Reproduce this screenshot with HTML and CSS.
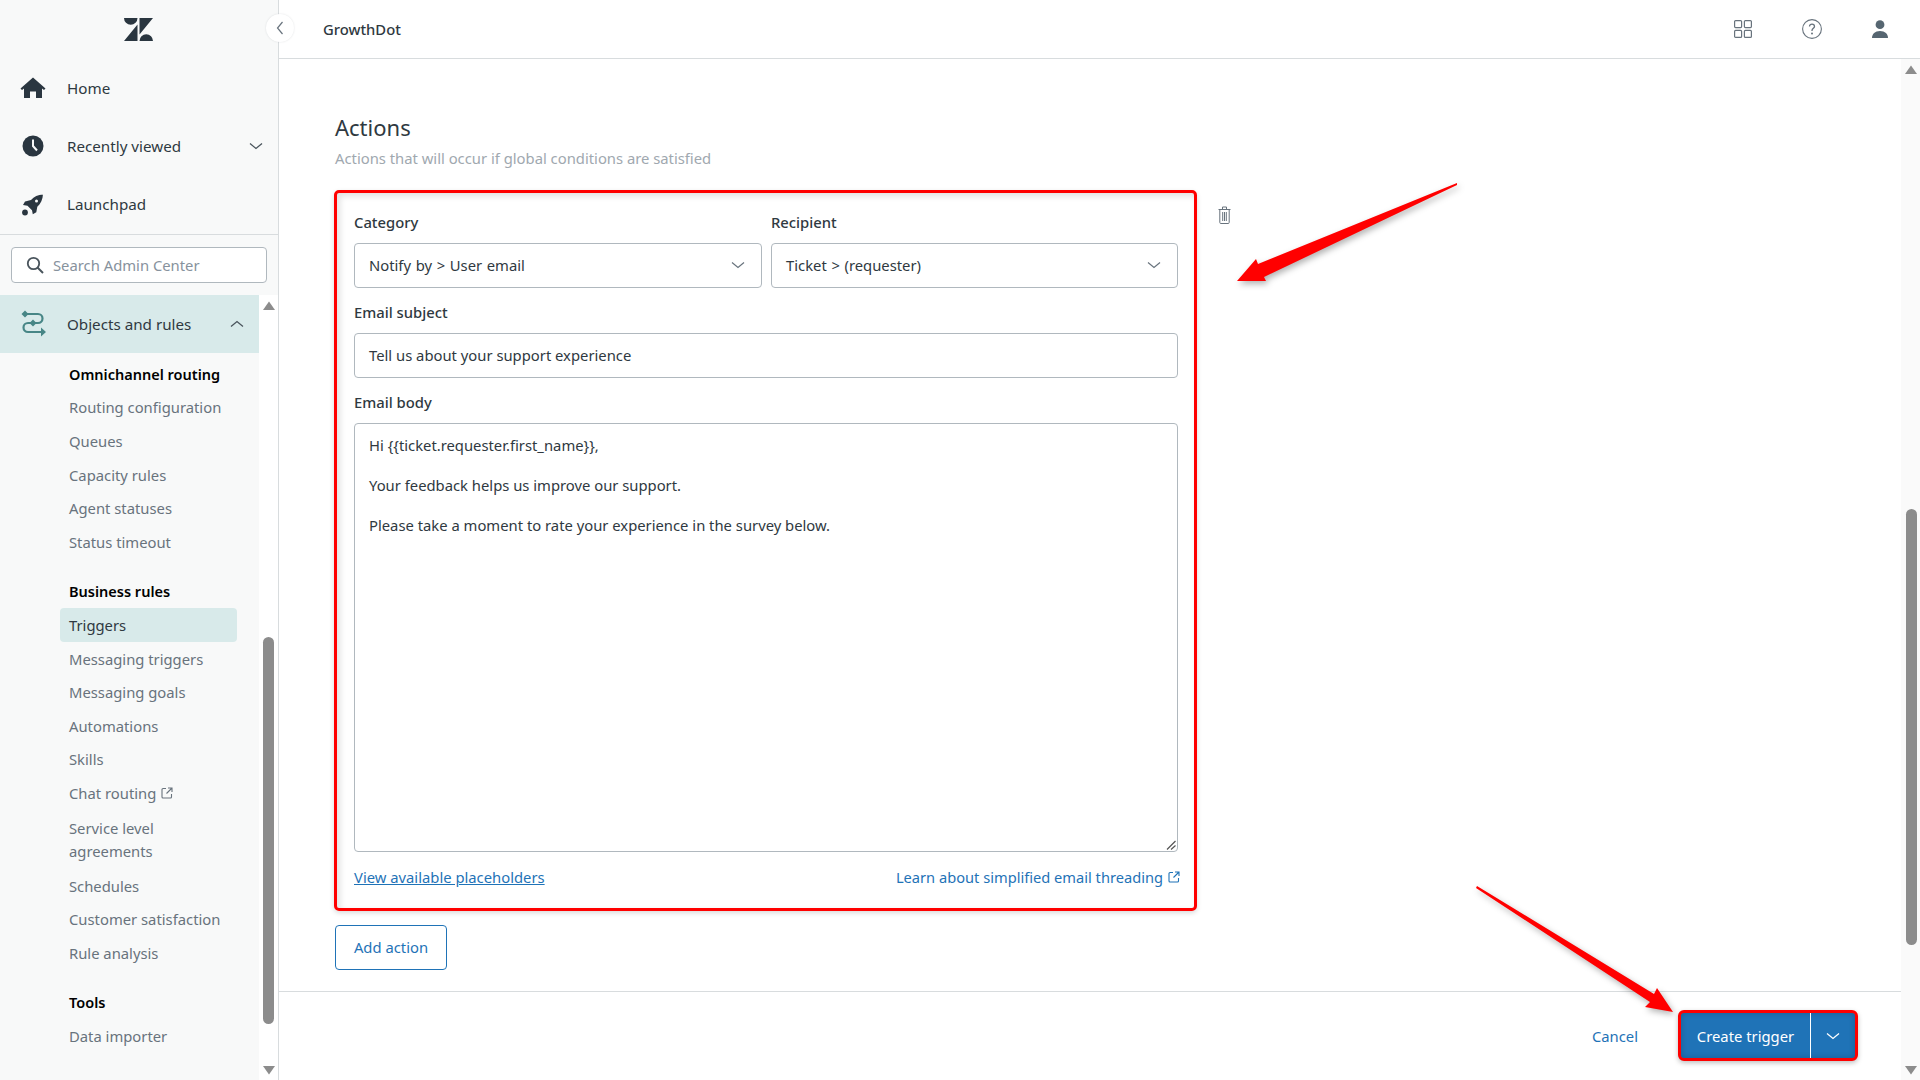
FILE: index.html
```html
<!DOCTYPE html>
<html lang="en">
<head>
<meta charset="utf-8">
<title>GrowthDot - Create trigger</title>
<link rel="stylesheet" href="styles.css">
</head>
<body>
<div class="app">
  <aside class="sidebar">
    <div class="logo-row">
      <svg class="logo" viewBox="0 0 29 23" width="29" height="23"><path d="M0 0h13.5a6.75 6.75 0 0 1-13.5 0zM15.500 0H29L15.500 16.500zM13.500 6.500V23H0zM15.500 23a6.750 6.750 0 0 1 13.500 0z" fill="#2a3640"/></svg>
    </div>
    <nav class="top-nav">
      <div class="nav-row">
        <svg class="nav-icon" viewBox="0 0 26 22" width="26" height="22"><path d="M13 0.500L25.500 11.500 24 13 22 11.500V21h-6v-6.500h-6V21H4V11.500L2 13 0.500 11.500z" fill="#2a3640"/></svg>
        <span>Home</span>
      </div>
      <div class="nav-row">
        <svg class="nav-icon" viewBox="0 0 22 22" width="22" height="22"><circle cx="11" cy="11" r="10.500" fill="#2a3640"/><path d="M11 4.500V11l4 4.500" fill="none" stroke="#f8f9f9" stroke-width="2"/></svg>
        <span>Recently viewed</span>
        <svg class="chev" viewBox="0 0 14 8" width="14" height="8"><path d="M1 1.500l6 5 6-5" fill="none" stroke="#49545c" stroke-width="1.300"/></svg>
      </div>
      <div class="nav-row">
        <svg class="nav-icon" viewBox="0 0 22 22" width="22" height="22"><path d="M21 .5c-5 .3-9 2.200-12 5.500L3 7.500 1 11l4.500 .8 4.500 4.500 .8 4 3.500-2 1-5.500c3.500-3 5.500-7.500 5.700-12.800z" fill="#2a3640"/><circle cx="14.500" cy="7" r="1.500" fill="#f8f9f9"/><circle cx="3" cy="18.500" r="2.900" fill="#2a3640"/></svg>
        <span>Launchpad</span>
      </div>
    </nav>
    <div class="search-wrap">
      <div class="search">
        <svg viewBox="0 0 18 18" width="18" height="18"><circle cx="7.500" cy="7.500" r="5.700" fill="none" stroke="#49545c" stroke-width="1.800"/><path d="M11.500 11.500L17 17" stroke="#49545c" stroke-width="2"/></svg>
        <span>Search Admin Center</span>
      </div>
    </div>
    <div class="side-scroll">
      <div class="side-content">
        <div class="section-row">
          <svg class="nav-icon" viewBox="0 0 26 28" width="26" height="28"><path d="M5 4h13a4.500 4.500 0 0 1 0 9H8a4.500 4.500 0 0 0 0 9h15" fill="none" stroke="#478686" stroke-width="2.200"/><path d="M5 .5L8.500 4 5 7.500 1.500 4zM13 9.500l3.500 3.500-3.500 3.500L9.500 13zM21 17.500l5 4.500-5 4.500z" fill="#478686"/></svg>
          <span>Objects and rules</span>
          <svg class="chev-up" viewBox="0 0 14 8" width="14" height="8"><path d="M1 6.500l6-5 6 5" fill="none" stroke="#49545c" stroke-width="1.300"/></svg>
        </div>
        <ul class="sub-list">
          <li class="sub-head">Omnichannel routing</li>
          <li>Routing configuration</li>
          <li>Queues</li>
          <li>Capacity rules</li>
          <li>Agent statuses</li>
          <li>Status timeout</li>
          <li class="sub-head group-start">Business rules</li>
          <li class="sub-active">Triggers</li>
          <li>Messaging triggers</li>
          <li>Messaging goals</li>
          <li>Automations</li>
          <li>Skills</li>
          <li>Chat routing <svg class="ext" viewBox="0 0 12 12" width="12" height="12"><path d="M5 1.500H2A1 1 0 0 0 1 2.500v7.500a1 1 0 0 0 1 1h7.500a1 1 0 0 0 1-1V7M7 1h4v4M11 1L5.500 6.500" fill="none" stroke="#68737d" stroke-width="1.100"/></svg></li>
          <li class="two-line">Service level<br>agreements</li>
          <li>Schedules</li>
          <li>Customer satisfaction</li>
          <li>Rule analysis</li>
          <li class="sub-head group-start">Tools</li>
          <li>Data importer</li>
        </ul>
      </div>
      <div class="scrollbar side-bar">
        <svg class="arr" viewBox="0 0 12 9" width="12" height="9"><path d="M6 .5L12 9H0z" fill="#8c8c8c"/></svg>
        <div class="thumb side-thumb"></div>
        <svg class="arr arr-end" viewBox="0 0 12 9" width="12" height="9"><path d="M0 0h12L6 8.500z" fill="#8c8c8c"/></svg>
      </div>
    </div>
  </aside>

  <div class="main">
    <header class="topbar">
      <span class="brand">GrowthDot</span>
      <div class="top-icons">
        <svg viewBox="0 0 18 18" width="18" height="18"><g fill="none" stroke="#68737d" stroke-width="1.200" ><rect x=".6" y=".6" width="7" height="7" rx="1"/><rect x="10.400" y=".6" width="7" height="7" rx="1"/><rect x=".6" y="10.400" width="7" height="7" rx="1"/><rect x="10.400" y="10.400" width="7" height="7" rx="1"/></g></svg>
        <svg viewBox="0 0 20 20" width="20" height="20"><circle cx="10" cy="10" r="9.400" fill="none" stroke="#68737d" stroke-width="1.100"/><path d="M7.500 7.600c0-1.500 1.100-2.500 2.500-2.500s2.500 1 2.500 2.400c0 1.700-2.500 2-2.500 4v.6" fill="none" stroke="#68737d" stroke-width="1.300"/><circle cx="10" cy="14.600" r="1" fill="#68737d"/></svg>
        <svg viewBox="0 0 16 18" width="16" height="18"><circle cx="8" cy="4.700" r="4.400" fill="#566671"/><path d="M0 18c0-4 3-7 8-7s8 3 8 7z" fill="#566671"/></svg>
      </div>
      <div class="collapse">
        <svg viewBox="0 0 8 14" width="8" height="14"><path d="M6.500 1L1.500 7l5 6" fill="none" stroke="#68737d" stroke-width="1.200"/></svg>
      </div>
    </header>

    <div class="body">
      <div class="column">
        <section class="content">
          <h2 class="title">Actions</h2>
          <p class="subtitle">Actions that will occur if global conditions are satisfied</p>
          <div class="action-row">
            <div class="card">
              <div class="field-row">
                <div class="field">
                  <label class="label">Category</label>
                  <div class="control select">
                    <span>Notify by &gt; User email</span>
                    <svg viewBox="0 0 14 8" width="14" height="8"><path d="M1 1.500l6 5 6-5" fill="none" stroke="#68737d" stroke-width="1.200"/></svg>
                  </div>
                </div>
                <div class="field">
                  <label class="label">Recipient</label>
                  <div class="control select">
                    <span>Ticket &gt; (requester)</span>
                    <svg viewBox="0 0 14 8" width="14" height="8"><path d="M1 1.500l6 5 6-5" fill="none" stroke="#68737d" stroke-width="1.200"/></svg>
                  </div>
                </div>
              </div>
              <label class="label spaced">Email subject</label>
              <div class="control">Tell us about your support experience</div>
              <label class="label spaced">Email body</label>
              <div class="textarea">
                <p>Hi {{ticket.requester.first_name}},</p>
                <p>Your feedback helps us improve our support.</p>
                <p>Please take a moment to rate your experience in the survey below.</p>
                <svg class="grip" viewBox="0 0 10 10" width="10" height="10"><path d="M9.500 1L1 9.500M9.500 5.500L5 9.500" stroke="#555" stroke-width="1.200"/></svg>
              </div>
              <div class="links">
                <a class="link underlined">View available placeholders</a>
                <a class="link link-ext">Learn about simplified email threading <svg class="ext-blue" viewBox="0 0 12 12" width="12" height="12"><path d="M5 1.500H2A1 1 0 0 0 1 2.500v7.500a1 1 0 0 0 1 1h7.500a1 1 0 0 0 1-1V7M7 1h4v4M11 1L5.500 6.500" fill="none" stroke="#1f73b7" stroke-width="1.100"/></svg></a>
              </div>
            </div>
            <svg class="trash" viewBox="0 0 13 18" width="13" height="18"><path d="M.5 3.500h12M4.500 3.500V1h4v2.500M1.800 3.500v13a1 1 0 0 0 1 1h7.400a1 1 0 0 0 1-1v-13M4.700 6v9M6.500 6v9M8.300 6v9" fill="none" stroke="#68737d" stroke-width="1"/></svg>
          </div>
          <button class="add-action">Add action</button>
        </section>
        <footer class="footer">
          <a class="cancel">Cancel</a>
          <div class="create">
            <span class="create-main">Create trigger</span>
            <span class="create-drop"><svg viewBox="0 0 14 8" width="14" height="8"><path d="M1 1.500l6 5 6-5" fill="none" stroke="#fff" stroke-width="1.300"/></svg></span>
          </div>
        </footer>
      </div>
      <div class="scrollbar main-bar">
        <svg class="arr" viewBox="0 0 12 9" width="12" height="9"><path d="M6 .5L12 9H0z" fill="#8c8c8c"/></svg>
        <div class="thumb main-thumb"></div>
        <svg class="arr arr-end" viewBox="0 0 12 9" width="12" height="9"><path d="M0 0h12L6 8.500z" fill="#8c8c8c"/></svg>
      </div>
    </div>
  </div>
</div>
<svg class="annotations" viewBox="0 0 1920 1080" width="1920" height="1080">
  <polygon points="1457,183 1457,185 1264,277 1266,281 1237,281 1256,259 1258,264" fill="#f00"/>
  <polygon points="1477,886 1654,994 1657,988 1673,1012 1645,1007 1650,1002 1476,888" fill="#f00"/>
</svg>
</body>
</html>
```

FILE: styles.css
```css
* { box-sizing: border-box; }
html, body { margin: 0; height: 100%; overflow: hidden; }
body {
  font-family: "Noto Sans", "Open Sans", sans-serif;
  font-size: 14.8px;
  line-height: 22px;
  color: #2f3941;
  background: #fff;
}
.app { display: flex; width: 1920px; height: 1080px; }

.sidebar {
  width: 279px;
  flex: none;
  display: flex;
  flex-direction: column;
  background: #f8f9f9;
  border-right: 1px solid #d8dcde;
}
.logo-row { height: 59px; flex: none; display: flex; justify-content: center; padding-top: 18px; padding-right: 2px; }
.logo { display: block; }
.top-nav { flex: none; border-bottom: 1px solid #d8dcde; height: 176px; }
.nav-row, .section-row {
  position: relative;
  display: flex;
  align-items: center;
  height: 58px;
  padding-left: 67px;
  padding-bottom: 1px;
  font-size: 15.200px;
}
.nav-row:last-child { height: 59px; }
.nav-icon { position: absolute; left: 33px; top: 50%; transform: translate(-50%, -50%); }
.chev { position: absolute; left: 249px; top: 25px; }
.search-wrap { flex: none; padding: 12px 11px 12px; }
.search {
  display: flex;
  align-items: center;
  gap: 9px;
  height: 36px;
  padding-left: 14px;
  background: #fff;
  border: 1px solid #b0b8be;
  border-radius: 4px;
  color: #87929d;
}
.side-scroll { flex: 1; min-height: 0; display: flex; background: #fff; }
.side-content { flex: 1; min-width: 0; background: #f8f9f9; }
.section-row { height: 58px; background: #d8eaea; }
.chev-up { position: absolute; left: 230px; top: 25px; }
.sub-list { list-style: none; margin: 0; padding: 4px 0 0; }
.sub-list li {
  display: flex;
  align-items: center;
  gap: 5px;
  height: 33.600px;
  margin: 0 22px 0 60px;
  padding-left: 9px;
  color: #68737d;
  border-radius: 4px;
}
.sub-list li.sub-head { color: #000; font-weight: 600; font-size: 14.500px; }
.sub-list li.group-start { margin-top: 16px; }
.sub-list li.sub-active { background: #d8eaea; color: #2f3941; }
.sub-list li.two-line { display: block; height: auto; padding-top: 7px; padding-bottom: 6px; line-height: 23px; }

.scrollbar { flex: none; width: 19px; display: flex; flex-direction: column; align-items: center; position: relative; }
.arr { display: block; margin-top: 6px; flex: none; }
.arr-end { margin-top: auto; margin-bottom: 5px; }
.thumb { position: absolute; left: 4px; width: 11px; background: #8c8c8c; border-radius: 5.500px; }
.side-thumb { top: 342px; height: 387px; }
.main-thumb { top: 450px; height: 436px; left: 5px; }
.main-bar { background: #fafafa; }

.main { flex: 1; min-width: 0; display: flex; flex-direction: column; }
.topbar {
  position: relative;
  flex: none;
  height: 59px;
  display: flex;
  align-items: center;
  justify-content: space-between;
  padding-left: 44px;
  border-bottom: 1px solid #d8dcde;
}
.brand { font-weight: 500; }
.top-icons { display: flex; align-items: center; gap: 50px; padding-right: 32px; }
.top-icons svg { display: block; }
.collapse {
  position: absolute;
  left: -13px;
  top: 14px;
  width: 28px;
  height: 28px;
  display: flex;
  align-items: center;
  justify-content: center;
  background: #fff;
  border-radius: 50%;
  box-shadow: 0 0 2px rgba(47, 57, 65, .15);
}

.body { flex: 1; min-height: 0; display: flex; }
.column { flex: 1; min-width: 0; display: flex; flex-direction: column; }
.content { flex: 1; min-height: 0; padding: 54px 0 0 56px; }
.title { margin: 0; font-size: 22px; line-height: 28px; font-weight: 400; }
.subtitle { margin: 7px 0 0; line-height: 20px; color: #a0a8af; }
.action-row { display: flex; align-items: flex-start; gap: 21px; margin-top: 22px; margin-left: -1px; }
.card {
  width: 863px;
  height: 721px;
  flex: none;
  padding: 18px 16px 0 17px;
  border: 3px solid #f00;
  border-radius: 5px;
  box-shadow: inset 3px 3px 6px rgba(0, 0, 0, .12), 0 2px 5px rgba(0, 0, 0, .15);
}
.trash { margin-top: 16px; flex: none; }
.field-row { display: grid; grid-template-columns: 408px 407px; gap: 9px; }
.label { display: block; font-weight: 500; margin-bottom: 10px; }
.label.spaced { margin-top: 13px; }
.control {
  display: flex;
  align-items: center;
  justify-content: space-between;
  height: 45px;
  padding: 0 16px 2px 14px;
  border: 1px solid #b0b8be;
  border-radius: 4px;
}
.select span { word-spacing: .8px; }
.textarea {
  position: relative;
  height: 429px;
  padding: 10px 14px;
  border: 1px solid #b0b8be;
  border-radius: 4px;
}
.textarea p { margin: 0 0 18.200px; }
.grip { position: absolute; right: 1px; bottom: 1px; }
.links { display: flex; justify-content: space-between; align-items: center; margin-top: 14px; }
.link { color: #1f73b7; display: inline-flex; align-items: center; gap: 5px; }
.link-ext { font-size: 14.650px; margin-right: -2px; }
.underlined { text-decoration: underline; }
.add-action {
  display: block;
  margin-top: 14px;
  width: 112px;
  height: 45px;
  padding: 0 0 2px;
  font: inherit;
  color: #1f73b7;
  background: #fff;
  border: 1px solid #1f73b7;
  border-radius: 4px;
}
.footer {
  flex: none;
  height: 89px;
  display: flex;
  align-items: center;
  justify-content: flex-end;
  gap: 40px;
  padding-right: 43px;
  border-top: 1px solid #d8dcde;
}
.cancel { color: #1f73b7; }
.create {
  display: flex;
  width: 180px;
  height: 51px;
  margin-top: -1px;
  color: #fff;
  background: #1f73b7;
  border: 3px solid #f00;
  border-radius: 6px;
  box-shadow: 0 2px 5px rgba(0, 0, 0, .25), inset 0 0 6px rgba(0, 0, 0, .2);
}
.create-main { flex: 1; display: flex; align-items: center; justify-content: center; }
.create-drop { width: 45px; display: flex; align-items: center; justify-content: center; border-left: 1px solid #fff; }

.annotations {
  position: absolute;
  left: 0;
  top: 0;
  pointer-events: none;
  filter: drop-shadow(2px 3px 3px rgba(0, 0, 0, .3));
}
```
